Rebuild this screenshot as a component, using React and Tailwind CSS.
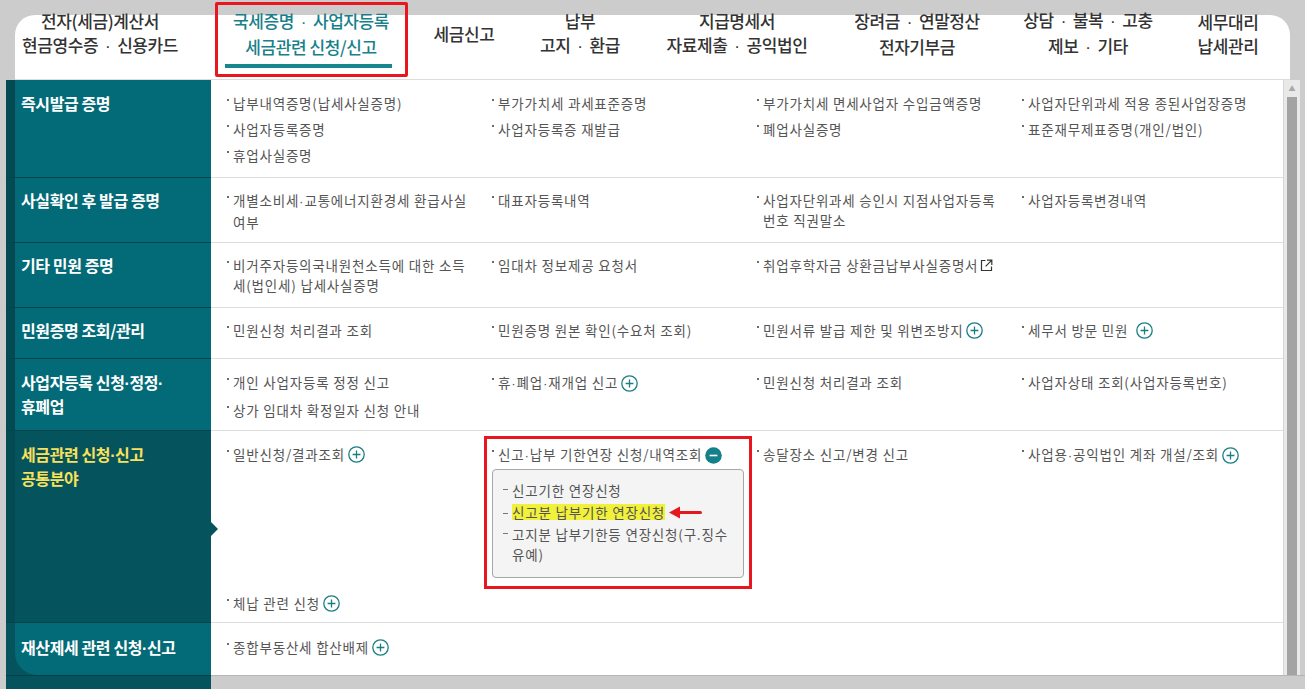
import React from 'react';

const navItems = [
    { lines: ['전자(세금)계산서', '현금영수증 · 신용카드'], ml: 'ml-[35px]' },
    { lines: ['국세증명 · 사업자등록', '세금관련 신청/신고'], ml: 'ml-[111px]', active: true },
    { lines: ['세금신고'], ml: 'ml-[53px]' },
    { lines: ['납부', '고지 · 환급'], ml: 'ml-[16px]' },
    { lines: ['지급명세서', '자료제출 · 공익법인'], ml: 'ml-[57px]' },
    { lines: ['장려금 · 연말정산', '전자기부금'], ml: 'ml-[80px]' },
    { lines: ['상담 · 불복 · 고충', '제보 · 기타'], ml: 'ml-[71px]' },
    { lines: ['세무대리', '납세관리'], ml: 'ml-[40px]' },
];

// nav separators get a fixed slot so the spacing matches
function navLine(s) {
    return s.split(' · ').map((p, i) => (
        <React.Fragment key={i}>
            {i > 0 && <span className="inline-block w-[19px] text-center font-['Liberation_Sans']">·</span>}
            {p}
        </React.Fragment>
    ));
}

// narrow middle dot + line breaks
function fmt(s) {
    return s.split('\n').map((line, li) => (
        <React.Fragment key={li}>
            {li > 0 && <br />}
            {line.split('·').map((p, pi) => (
                <React.Fragment key={pi}>
                    {pi > 0 && <span className="font-['Liberation_Sans']">·</span>}
                    {p}
                </React.Fragment>
            ))}
        </React.Fragment>
    ));
}

function PlusIcon() {
    return (
        <svg width="17" height="17" viewBox="0 0 17 17" className="ml-[3px] shrink-0">
            <circle cx="8.5" cy="8.5" r="7.7" fill="none" stroke="#1a7d86" strokeWidth="1.3" />
            <path d="M8.5 4.6v7.8M4.6 8.5h7.8" stroke="#1a7d86" strokeWidth="1.3" />
        </svg>
    );
}

function MinusIcon() {
    return (
        <svg width="17" height="17" viewBox="0 0 17 17" className="ml-[3px] shrink-0">
            <circle cx="8.5" cy="8.5" r="8.3" fill="#15808a" />
            <path d="M4.6 8.5h7.8" stroke="#fff" strokeWidth="1.6" />
        </svg>
    );
}

function ExtIcon() {
    return (
        <svg width="13" height="13" viewBox="0 0 13 13" className="ml-[2px] shrink-0">
            <path d="M5.5 1.5H1.5v10h10v-4" fill="none" stroke="#333" strokeWidth="1.2" />
            <path d="M7 1.2h4.8V6M11.6 1.4L5.6 7.4" fill="none" stroke="#333" strokeWidth="1.2" />
        </svg>
    );
}

function Item({ t, icon }) {
    return (
        <div className="flex items-start text-[13.5px] leading-5 tracking-[0.8px] text-[#555] whitespace-nowrap">
            <span className="mt-[6px] mr-[4px] h-[2px] w-[2px] shrink-0 bg-[#6a6a6a]" />
            <div className="flex items-center">
                <span>{fmt(t)}</span>
                {icon}
            </div>
        </div>
    );
}

function SubItem({ children }) {
    return (
        <div className="flex items-start text-[13.5px] leading-5 tracking-[0.8px] text-[#555]">
            <span className="mt-[9px] mr-[4px] h-[1px] w-[5px] shrink-0 bg-[#777]" />
            <div className="flex items-center">{children}</div>
        </div>
    );
}

function Expanded() {
    return (
        <div className="relative">
            <Item t="신고·납부 기한연장 신청/내역조회" icon={<MinusIcon />} />
            <div className="mt-[3px] mb-[9px] flex h-[109px] w-[252px] flex-col gap-[4px] rounded-[4px] border border-[#a3a8a8] bg-[#f3f4f3] pt-[10px] pl-[10px]">
                <SubItem>신고기한 연장신청</SubItem>
                <SubItem>
                    <span className="bg-[#f1f03a] leading-4">신고분 납부기한 연장신청</span>
                    <svg width="36" height="14" viewBox="0 0 36 14" className="ml-[4px]">
                        <path d="M8 7.5H31.5" stroke="#e3191e" strokeWidth="3" strokeLinecap="round" />
                        <polygon points="0,7.5 11,1.5 11,13.5" fill="#e3191e" />
                    </svg>
                </SubItem>
                <SubItem>
                    <span>{fmt('고지분 납부기한등 연장신청(구.징수\n유예)')}</span>
                </SubItem>
            </div>
            <div className="pointer-events-none absolute -left-[8px] -top-[8px] h-[153px] w-[268px] border-[3px] border-[#e8161e]" />
        </div>
    );
}

const rows = [
    {
        label: '즉시발급 증명',
        h: 'h-[97px]', lpt: 'pt-[12px]', cpt: 'pt-[13px]', first: true,
        items: [
            <Item t="납부내역증명(납세사실증명)" />,
            <Item t="부가가치세 과세표준증명" />,
            <Item t="부가가치세 면세사업자 수입금액증명" />,
            <Item t="사업자단위과세 적용 종된사업장증명" />,
            <Item t="사업자등록증명" />,
            <Item t="사업자등록증 재발급" />,
            <Item t="폐업사실증명" />,
            <Item t="표준재무제표증명(개인/법인)" />,
            <Item t="휴업사실증명" />,
        ],
    },
    {
        label: '사실확인 후 발급 증명',
        h: 'h-[65px]', lpt: 'pt-[11px]', cpt: 'pt-[12px]',
        items: [
            <Item t={'개별소비세·교통에너지환경세 환급사실\n여부'} />,
            <Item t="대표자등록내역" />,
            <Item t={'사업자단위과세 승인시 지점사업자등록\n번호 직권말소'} />,
            <Item t="사업자등록변경내역" />,
        ],
    },
    {
        label: '기타 민원 증명',
        h: 'h-[65px]', lpt: 'pt-[11px]', cpt: 'pt-[12px]',
        items: [
            <Item t={'비거주자등의국내원천소득에 대한 소득\n세(법인세) 납세사실증명'} />,
            <Item t="임대차 정보제공 요청서" />,
            <Item t="취업후학자금 상환금납부사실증명서" icon={<ExtIcon />} />,
        ],
    },
    {
        label: '민원증명 조회/관리',
        h: 'h-[51px]', lpt: 'pt-[11px]', cpt: 'pt-[12px]',
        items: [
            <Item t="민원신청 처리결과 조회" />,
            <Item t="민원증명 원본 확인(수요처 조회)" />,
            <Item t="민원서류 발급 제한 및 위변조방지" icon={<PlusIcon />} />,
            <Item t="세무서 방문 민원" icon={<span className="ml-[5px] flex"><PlusIcon /></span>} />,
        ],
    },
    {
        label: '사업자등록 신청·정정·\n휴폐업',
        h: 'h-[72px]', lpt: 'pt-[12px]', cpt: 'pt-[13px]',
        items: [
            <Item t="개인 사업자등록 정정 신고" />,
            <Item t="휴·폐업·재개업 신고" icon={<PlusIcon />} />,
            <Item t="민원신청 처리결과 조회" />,
            <Item t="사업자상태 조회(사업자등록번호)" />,
            <Item t="상가 임대차 확정일자 신청 안내" />,
        ],
    },
    {
        label: '세금관련 신청·신고\n공통분야',
        h: 'h-[192px]', lpt: 'pt-[12px]', cpt: 'pt-[13px]', selected: true,
        items: [
            <Item t="일반신청/결과조회" icon={<PlusIcon />} />,
            <Expanded />,
            <Item t="송달장소 신고/변경 신고" />,
            <Item t="사업용·공익법인 계좌 개설/조회" icon={<PlusIcon />} />,
            <Item t="체납 관련 신청" icon={<PlusIcon />} />,
        ],
    },
    {
        label: '재산제세 관련 신청·신고',
        h: 'h-[53px]', lpt: 'pt-[13px]', cpt: 'pt-[14px]', last: true,
        items: [<Item t="종합부동산세 합산배제" icon={<PlusIcon />} />],
    },
];

function Row({ row }) {
    const inner = row.selected ? 'bg-[#05535d] text-[#f9e15a]' : 'bg-[#036b77] text-white';
    return (
        <div className={`flex ${row.h}`}>
            <div className={`w-[205px] shrink-0 pl-[9px] ${row.last ? 'bg-[#05535d]' : 'bg-[#044a53]'} ${row.first ? '' : 'border-t border-[#04454d]'}`}>
                <div className={`relative h-full pl-[6px] ${row.lpt} ${inner} ${row.last ? 'rounded-bl-[22px]' : ''} text-[16px] font-bold leading-[23px] tracking-[-0.4px]`}>
                    {fmt(row.label)}
                    {row.selected && (
                        <span className="absolute left-full top-[91px] h-0 w-0 border-y-[7px] border-l-[7px] border-y-transparent border-l-[#05535d]" />
                    )}
                </div>
            </div>
            <div className={`flex-1 bg-white pl-[16px] ${row.cpt} ${row.first ? '' : 'border-t border-[#dedede]'}`}>
                <div className="grid grid-cols-[265px_265px_265px_1fr] gap-y-[6px] items-start">
                    {row.items.map((it, i) => (
                        <React.Fragment key={i}>{it}</React.Fragment>
                    ))}
                </div>
            </div>
        </div>
    );
}

export default function App() {
    return (
        <div className="h-[689px] w-[1305px] overflow-hidden bg-[#cccccc] font-['Noto_Sans_CJK_KR','Noto_Sans',sans-serif]">
            {/* top nav */}
            <div className="mx-[15px] mt-[15px] flex h-[65px] flex-col rounded-t-[20px] border-b border-[#dcdcdc] bg-white">
                <div className="-mt-[5px] flex">
                    {navItems.map((n, i) => (
                        <div
                            key={i}
                            className={`relative flex h-[48px] w-[100px] shrink-0 flex-col items-center justify-center whitespace-nowrap text-[17px] font-medium leading-6 tracking-[-0.4px] ${n.ml} ${n.active ? 'text-[#17808a]' : 'text-[#333]'}`}
                        >
                            {n.lines.map((l) => (
                                <span key={l}>{navLine(l)}</span>
                            ))}
                            {n.active && (
                                <>
                                    <span className="absolute -left-[36px] top-[54px] h-[4px] w-[167px] bg-[#17878f]" />
                                    <span className="pointer-events-none absolute -left-[46px] -top-[8px] h-[75px] w-[193px] rounded-[2px] border-[3px] border-[#e8161e]" />
                                </>
                            )}
                        </div>
                    ))}
                </div>
            </div>

            {/* body */}
            <div className="flex h-[595px] pl-[6px]">
                <div className="flex w-[1277px] flex-col">
                    {rows.map((r, i) => (
                        <Row key={i} row={r} />
                    ))}
                </div>
                <div className="flex w-[17px] flex-col border-l border-[#d6d6d6] bg-[#e9e9e9]">
                    <div className="flex h-[17px] items-center justify-center text-[7px] leading-none text-[#a8a8a8]">▲</div>
                    <div className="mx-[3px] flex-1 bg-[#a3a3a3]" />
                </div>
            </div>

            {/* bottom */}
            <div className="flex h-[14px] pl-[6px]">
                <div className="w-[205px] border-t border-[#043f47] bg-[#05535d]" />
                <div className="flex-1 border-t border-[#b5b5b5]" />
            </div>
        </div>
    );
}
